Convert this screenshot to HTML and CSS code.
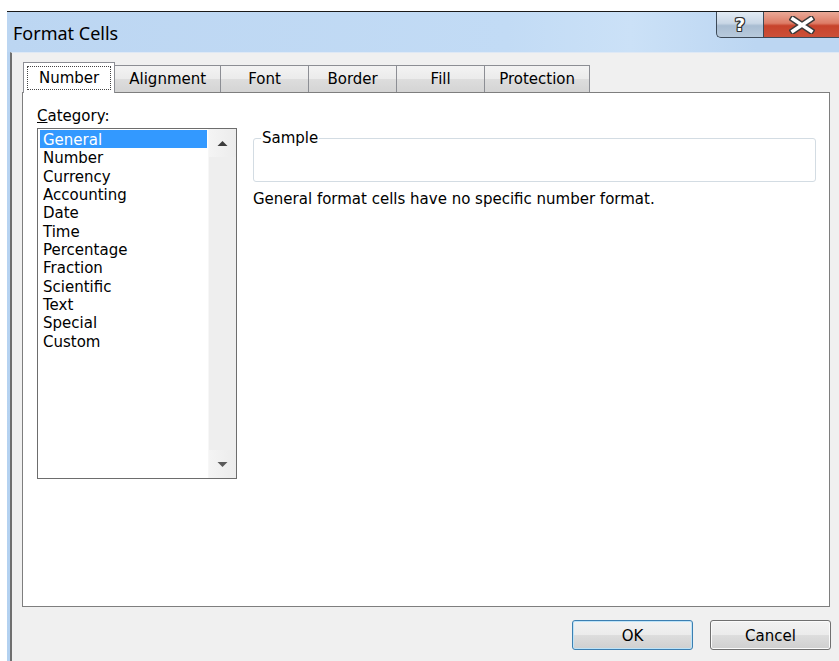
FILE: index.html
```html
<!DOCTYPE html>
<html lang="en">
<head>
<meta charset="utf-8">
<title>Format Cells</title>
<link rel="stylesheet" href="styles.css">
</head>
<body>
<div class="window">
  <div class="titlebar">
    <span class="title">Format Cells</span>
    <div class="caption">
      <button class="cap-btn help" type="button"><span class="help-glyph">?</span></button>
      <button class="cap-btn close" type="button" aria-label="Close">
        <svg width="26" height="18" viewBox="0 0 26 18">
          <path d="M4 3 L22 15 M22 3 L4 15" stroke="#3a3a3a" stroke-width="6.5" stroke-linecap="square" fill="none"/>
          <path d="M4 3 L22 15 M22 3 L4 15" stroke="#ffffff" stroke-width="3.6" stroke-linecap="square" fill="none"/>
        </svg>
      </button>
    </div>
  </div>

  <div class="client">
    <div class="tabs">
      <div class="tab selected"><span class="focus">Number</span></div>
      <div class="tab">Alignment</div>
      <div class="tab">Font</div>
      <div class="tab">Border</div>
      <div class="tab">Fill</div>
      <div class="tab">Protection</div>
    </div>

    <div class="panel">
      <div class="label"><u>C</u>ategory:</div>
      <div class="body-row">
        <div class="listbox">
          <ul class="items">
            <li class="sel">General</li>
            <li>Number</li>
            <li>Currency</li>
            <li>Accounting</li>
            <li>Date</li>
            <li>Time</li>
            <li>Percentage</li>
            <li>Fraction</li>
            <li>Scientific</li>
            <li>Text</li>
            <li>Special</li>
            <li>Custom</li>
          </ul>
          <div class="scrollbar">
            <div class="arrow">
              <svg width="11" height="7" viewBox="0 0 11 7"><path d="M0.5 6 L5.5 1 L10.5 6 Z" fill="#3c3c3c"/></svg>
            </div>
            <div class="arrow">
              <svg width="11" height="7" viewBox="0 0 11 7"><path d="M0.5 1 L5.5 6 L10.5 1 Z" fill="#5a5a5a"/></svg>
            </div>
          </div>
        </div>

        <div class="details">
          <fieldset class="sample">
            <legend>Sample</legend>
          </fieldset>
          <p class="desc">General format cells have no specific number format.</p>
        </div>
      </div>
    </div>

    <div class="footer">
      <button class="btn default" type="button">OK</button>
      <button class="btn" type="button">Cancel</button>
    </div>
  </div>
</div>
</body>
</html>
```

FILE: styles.css
```css
* {
  box-sizing: border-box;
}

html, body {
  margin: 0;
  padding: 0;
}

body {
  width: 839px;
  height: 661px;
  overflow: hidden;
  background: #ffffff;
  font-family: "DejaVu Sans", "Noto Sans", sans-serif;
  font-size: 15px;
  color: #000;
}

/* window frame */
.window {
  margin: 11px 0 0 7px;
  height: 650px;
  border-top: 1px solid #1a1a1a;
  background: linear-gradient(to bottom, #c4dcf5 0px, #b9d4f1 40px, #b3d1f0 100%);
  display: flex;
  flex-direction: column;
}

.titlebar {
  height: 40px;
  flex: none;
  display: flex;
  justify-content: space-between;
  align-items: flex-start;
  background: linear-gradient(to right, #bcd6f2 0%, #c2dbf5 60%, #cbe1f7 75%, #bcd6f2 90%);
}

.title {
  margin: 9px 0 0 6px;
  font-family: "Noto Sans", "Open Sans", sans-serif;
  font-size: 18px;
  line-height: 24px;
  color: #000;
}

.caption {
  display: flex;
}

.cap-btn {
  height: 26px;
  margin: 0;
  padding: 0;
  border: 1px solid #3d4a58;
  border-top: none;
  display: flex;
  align-items: center;
  justify-content: center;
  font: inherit;
}

.help {
  width: 47px;
  border-radius: 0 0 0 5px;
  border-right: none;
  background: linear-gradient(to bottom, #e2ebf4 0%, #c9d7e6 45%, #a9bdd2 55%, #b8cadc 100%);
}

.help-glyph {
  font-family: "DejaVu Sans", sans-serif;
  font-weight: bold;
  font-size: 18px;
  line-height: 18px;
  color: #fff;
  text-shadow: 1px 0 0 #333, -1px 0 0 #333, 0 1px 0 #333, 0 -1px 0 #333,
               1px 1px 0 #333, -1px -1px 0 #333, 1px -1px 0 #333, -1px 1px 0 #333;
}

.close {
  width: 76px;
  border-right: none;
  background: linear-gradient(to bottom, #eaa997 0%, #dd7c66 45%, #c7432c 55%, #cc5038 100%);
}

/* client area */
.client {
  flex: 1;
  margin-left: 3px;
  border-left: 2px solid #6f6f6f;
  border-top: 1px solid #dfe9f5;
  background: #f0f0f0;
  padding: 9px 8px 0 10px;
}

.tabs {
  display: flex;
  align-items: flex-end;
  height: 30px;
  margin-left: 1px;
  position: relative;
  z-index: 1;
}

.tab {
  height: 27px;
  min-width: 89px;
  padding: 0 14px;
  border: 1px solid #8c8e94;
  border-bottom: none;
  margin-left: -1px;
  background: linear-gradient(to bottom, #f3f3f3 0%, #ebebeb 50%, #dddddd 51%, #d4d4d4 100%);
  text-align: center;
  line-height: 27px;
}

.tab:first-child {
  margin-left: 0;
}

.tab.selected {
  height: 31px;
  margin-bottom: -1px;
  padding: 3px 3px 0;
  background: #ffffff;
  position: relative;
  z-index: 2;
}

.tab .focus {
  display: block;
  height: 24px;
  line-height: 23px;
  padding: 0 11px;
  border: 1px dotted #444;
}

.panel {
  width: 808px;
  height: 515px;
  border: 1px solid #7e7e7e;
  background: #ffffff;
  padding: 14px 13px 0 14px;
}

.label {
  line-height: 18px;
  height: 18px;
}

.body-row {
  display: flex;
  margin-top: 3px;
}

/* category list */
.listbox {
  width: 200px;
  height: 351px;
  border: 1px solid #6d6d6d;
  display: flex;
  flex: none;
}

.items {
  flex: 1;
  list-style: none;
  margin: 0;
  padding: 1px 1px 0 2px;
}

.items li {
  height: 18.33px;
  padding: 2px 0 0 3px;
  line-height: 16.33px;
  white-space: nowrap;
}

.items li.sel {
  background: #3399ff;
  color: #ffffff;
}

.scrollbar {
  width: 28px;
  display: flex;
  flex-direction: column;
  justify-content: space-between;
  background: #eeeeee;
  border-left: 1px solid #f7f7f7;
}

.arrow {
  height: 28px;
  display: flex;
  align-items: center;
  justify-content: center;
  background: linear-gradient(to right, #f4f4f4, #ececec);
}

/* sample and description */
.details {
  flex: 1;
  margin-left: 16px;
}

.sample {
  margin: 1px 0 0;
  height: 53px;
  padding: 0 7px;
  border: 1px solid #d3dce3;
  border-radius: 3px;
}

.sample legend {
  padding: 0 1px;
  line-height: 18px;
}

.desc {
  margin: 8px 0 0;
  line-height: 18px;
}

/* dialog buttons */
.footer {
  display: flex;
  justify-content: flex-end;
  gap: 17px;
  margin-top: 13px;
}

.btn {
  width: 121px;
  height: 30px;
  margin: 0;
  padding: 2px 0 0;
  font: inherit;
  color: #000;
  border: 1px solid #707070;
  border-radius: 3px;
  background: linear-gradient(to bottom, #f2f2f2 0%, #ebebeb 50%, #dddddd 51%, #cfcfcf 100%);
  box-shadow: inset 0 0 0 1px #fbfbfb;
}

.btn.default {
  border-color: #3c7fb1;
  box-shadow: inset 0 0 0 1px #bde3f8;
}
```
